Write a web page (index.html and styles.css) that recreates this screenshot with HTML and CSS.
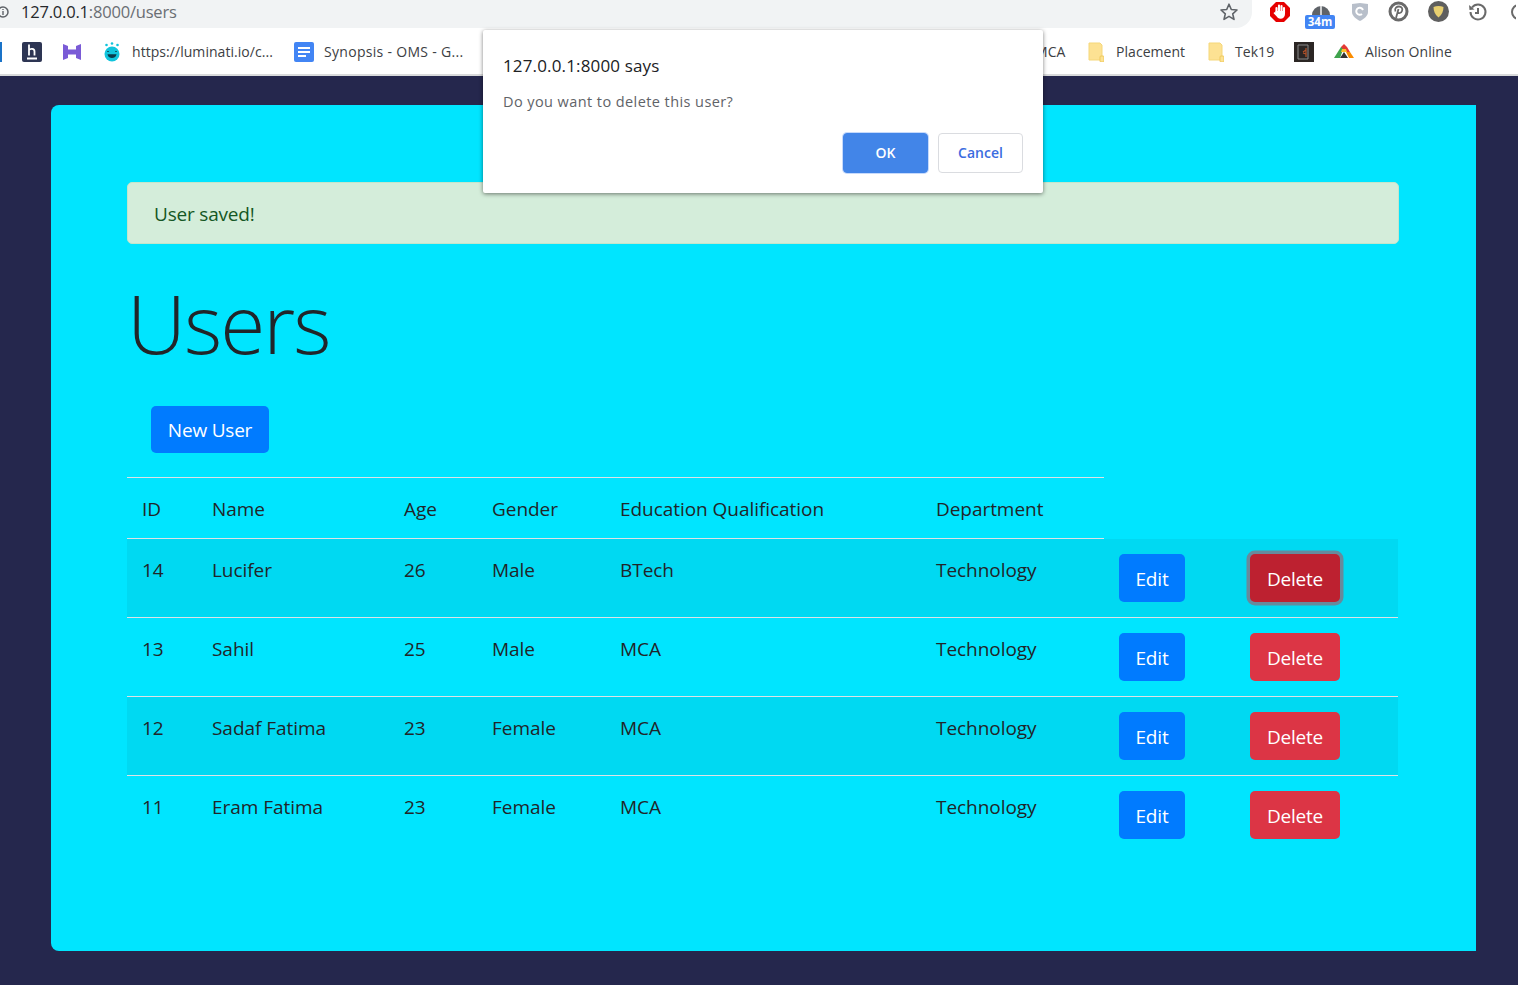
FILE: index.html
```html
<!DOCTYPE html>
<html lang="en">
<head>
    <meta charset="UTF-8">
    <meta name="viewport" content="width=device-width, initial-scale=1.0">
    <title>Users</title>
    <link rel="stylesheet" href="styles.css">
</head>
<body>
    <header class="browser">
        <div class="toolbar">
            <div class="omnibox">
                <svg class="info-icon" width="12" height="14" viewBox="0 0 12 14"><circle cx="3" cy="7" r="5" fill="none" stroke="#5f6368" stroke-width="1.5"/><path d="M3 6v4M3 4v1" stroke="#5f6368" stroke-width="1.4"/></svg>
                <span class="url"><span class="url-host">127.0.0.1</span>:8000/users</span>
                <svg class="star" width="20" height="20" viewBox="0 0 20 20"><path d="M10 2.2l2.3 5.3 5.7.5-4.3 3.8 1.3 5.6-5-3-5 3 1.3-5.6L2 8l5.7-.5z" fill="none" stroke="#5f6368" stroke-width="1.6" stroke-linejoin="round"/></svg>
            </div>
            <div class="extensions">
                <svg width="22" height="22" viewBox="0 0 22 22"><path d="M7 1h8l6 6v8l-6 6H7l-6-6V7z" fill="#e60000"/><path d="M7.500 12V7M10 11V4.500M12.500 11V5M15 12V7" stroke="#fff" stroke-width="2.100" stroke-linecap="round"/><path d="M6.500 10h9.500v3c0 3-2 4.800-4.500 4.800-2 0-3-1-4-2.500L4.800 12.500c-.6-1 .8-1.900 1.700-1z" fill="#fff"/></svg>
                <div class="timer">
                    <svg width="20" height="12" viewBox="0 0 20 12"><path d="M1 12a9 9 0 0118 0z" fill="#5f6368"/><path d="M10 2v10" stroke="#fff" stroke-width="1.400"/></svg>
                    <span class="timer-badge">34m</span>
                </div>
                <svg width="18" height="20" viewBox="0 0 18 20"><path d="M1 2l8-1 8 1v8c0 4-4 7-8 9-4-2-8-5-8-9z" fill="#b8bfca"/><path d="M12 8a3.500 3.500 0 10-1 4" fill="none" stroke="#fff" stroke-width="2"/></svg>
                <svg width="21" height="21" viewBox="0 0 21 21"><circle cx="10.500" cy="10.500" r="8.500" fill="none" stroke="#6a6a6a" stroke-width="3"/><path d="M8 17l2.500-9M7.500 10.500C6 7 9 5.500 11 5.500c2.500 0 4 2 3 4.500-.8 2-3.500 3-4.500 1" fill="none" stroke="#6a6a6a" stroke-width="1.800"/></svg>
                <svg width="21" height="21" viewBox="0 0 21 21"><circle cx="10.500" cy="10.500" r="10.500" fill="#5f5f5f"/><path d="M5.500 6c3-1.500 7-1.500 10 0 0 4-1.500 8-5 10.500C7 14 5.500 10 5.500 6z" fill="#e8cf70"/></svg>
                <svg width="20" height="20" viewBox="0 0 20 20"><path d="M4 5.500A7.500 7.500 0 112.500 10" fill="none" stroke="#6a6a6a" stroke-width="2"/><path d="M1 3l.5 5 5-.5z" fill="#6a6a6a"/><path d="M10 6v5H7" fill="none" stroke="#6a6a6a" stroke-width="2"/></svg>
                <svg class="ext-cut" width="6" height="20" viewBox="0 0 6 20"><circle cx="9" cy="10" r="7" fill="none" stroke="#6a6a6a" stroke-width="2"/></svg>
            </div>
        </div>
        <nav class="bookmarks">
            <div class="bm-cut"></div>
            <svg class="bm-h" width="20" height="20" viewBox="0 0 20 20"><rect width="20" height="20" rx="2" fill="#2d3553"/><path d="M7 2.500V13.500M7 8c1-1.500 5.500-2 5.500 1.500V13.500M5 16.500h10" fill="none" stroke="#fff" stroke-width="1.800"/></svg>
            <svg class="bm-hash" width="18" height="18" viewBox="0 0 18 18"><path d="M0 1l5 2v3.500h8V3l5-2v16l-5-2v-3.500H5V15l-5 2z" fill="#7a5bd6"/></svg>
            <svg class="bm-crown" width="16" height="20" viewBox="0 0 16 20"><circle cx="8" cy="12" r="7.500" fill="#11c4dc"/><path d="M4 10v-1M12 10v-1M4.500 13c1 3 6 3 7 0z" stroke="#0a3a4a" stroke-width="1.500" fill="#0a3a4a"/><circle cx="2.500" cy="3" r="1.300" fill="#11c4dc"/><circle cx="8" cy="1.500" r="1.300" fill="#11c4dc"/><circle cx="13.500" cy="3" r="1.300" fill="#11c4dc"/></svg>
            <span class="bm-label bm-luminati">https://luminati.io/c...</span>
            <svg class="bm-doc" width="20" height="20" viewBox="0 0 20 20"><rect width="20" height="20" rx="2" fill="#4285f4"/><path d="M4 6h12M4 10h12M4 14h8" stroke="#fff" stroke-width="2"/></svg>
            <span class="bm-label bm-synopsis">Synopsis - OMS - G...</span>
            <span class="bm-label bm-mca">MCA</span>
            <svg class="bm-folder bm-folder-first" width="16" height="20" viewBox="0 0 16 20"><path d="M1 1h11l2 2v15H1z" fill="#fde293" stroke="#f5d77a"/><rect x="12" y="14" width="4" height="6" rx="1" fill="#fde293" stroke="#eec95c"/></svg>
            <span class="bm-label bm-placement">Placement</span>
            <svg class="bm-folder bm-folder-second" width="16" height="20" viewBox="0 0 16 20"><path d="M1 1h11l2 2v15H1z" fill="#fde293" stroke="#f5d77a"/><rect x="12" y="14" width="4" height="6" rx="1" fill="#fde293" stroke="#eec95c"/></svg>
            <span class="bm-label bm-tek">Tek19</span>
            <svg class="bm-dark" width="20" height="20" viewBox="0 0 20 20"><rect width="20" height="20" fill="#2b2624"/><path d="M4 3h10v14H4z" fill="none" stroke="#8a8a8a"/><path d="M12 6v9M9 10l3-2M9 11l3 1" stroke="#b5532a" stroke-width="1.200" fill="none"/></svg>
            <svg class="bm-alison" width="20" height="16" viewBox="0 0 20 16"><path d="M0 14L7 3h3l-4 11z" fill="#3fa34d"/><path d="M7 3l3-3 3 3 3 5h-4z" fill="#e53935"/><path d="M12 8h4l4 6h-5z" fill="#fb8c00"/><path d="M6 14l4-6 4 6z" fill="#333"/><path d="M8 5h4l1 3H7z" fill="#fbc02d"/></svg>
            <span class="bm-label bm-alison-text">Alison Online</span>
        </nav>
    </header>

    <main class="page">
        <section class="card">
            <div class="alert">User saved!</div>
            <h1>Users</h1>
            <button class="btn btn-primary new-user">New User</button>
            <table class="users">
                <colgroup>
                    <col class="col-id"><col class="col-name"><col class="col-age"><col class="col-gender"><col class="col-edu"><col class="col-dept"><col class="col-edit"><col class="col-delete">
                </colgroup>
                <thead>
                    <tr>
                        <th>ID</th><th>Name</th><th>Age</th><th>Gender</th><th>Education Qualification</th><th>Department</th>
                    </tr>
                </thead>
                <tbody>
                    <tr>
                        <td>14</td><td>Lucifer</td><td>26</td><td>Male</td><td>BTech</td><td>Technology</td>
                        <td class="cell-action"><button class="btn btn-primary btn-edit">Edit</button></td>
                        <td class="cell-action"><button class="btn btn-danger btn-delete btn-focus">Delete</button></td>
                    </tr>
                    <tr>
                        <td>13</td><td>Sahil</td><td>25</td><td>Male</td><td>MCA</td><td>Technology</td>
                        <td class="cell-action"><button class="btn btn-primary btn-edit">Edit</button></td>
                        <td class="cell-action"><button class="btn btn-danger btn-delete">Delete</button></td>
                    </tr>
                    <tr>
                        <td>12</td><td>Sadaf Fatima</td><td>23</td><td>Female</td><td>MCA</td><td>Technology</td>
                        <td class="cell-action"><button class="btn btn-primary btn-edit">Edit</button></td>
                        <td class="cell-action"><button class="btn btn-danger btn-delete">Delete</button></td>
                    </tr>
                    <tr>
                        <td>11</td><td>Eram Fatima</td><td>23</td><td>Female</td><td>MCA</td><td>Technology</td>
                        <td class="cell-action"><button class="btn btn-primary btn-edit">Edit</button></td>
                        <td class="cell-action"><button class="btn btn-danger btn-delete">Delete</button></td>
                    </tr>
                </tbody>
            </table>
        </section>
    </main>

    <div class="dialog">
        <h2>127.0.0.1:8000 says</h2>
        <p>Do you want to delete this user?</p>
        <div class="dialog-actions">
            <button class="dialog-ok">OK</button>
            <button class="dialog-cancel">Cancel</button>
        </div>
    </div>
</body>
</html>
```

FILE: styles.css
```css
* {
    box-sizing: border-box;
}

html, body {
    height: 985px;
    overflow: hidden;
}

body {
    margin: 0;
    background-color: #25274d;
    font-family: "Open Sans", "Noto Sans", sans-serif;
    color: #212529;
    position: relative;
}

/* browser chrome */
.browser {
    background-color: #fff;
    height: 76px;
    border-bottom: 2px solid #d9dadb;
}

.toolbar {
    display: flex;
    height: 29px;
}

.omnibox {
    width: 1252px;
    height: 28px;
    background-color: #f1f3f4;
    border-bottom-right-radius: 16px;
    display: flex;
    align-items: center;
    padding-bottom: 5px;
    padding-right: 13px;
}

.url {
    margin-left: 9px;
    font-size: 16.500px;
    color: #6a6e73;
    letter-spacing: -0.2px;
}

.url-host {
    color: #26282b;
}

.star {
    margin-left: auto;
}

.extensions {
    flex: 1;
    display: flex;
    align-items: center;
    gap: 19px;
    padding-left: 17px;
    padding-bottom: 6px;
    overflow: hidden;
}

.timer {
    position: relative;
    width: 31px;
    height: 29px;
    display: flex;
    justify-content: center;
    padding-top: 3px;
    margin-top: 6px;
    margin-left: -5px;
    margin-right: -4px;
}

.timer-badge {
    position: absolute;
    left: 0;
    top: 15px;
    width: 30px;
    height: 14px;
    background-color: #4285f4;
    border-radius: 2px;
    color: #fff;
    font-size: 11.500px;
    font-weight: 700;
    line-height: 14px;
    text-align: center;
}

.ext-cut {
    margin-left: 3px;
}

.bookmarks {
    height: 45px;
    display: flex;
    align-items: center;
    position: relative;
}

.bm-label {
    font-size: 14px;
    color: #3c4043;
    white-space: nowrap;
    letter-spacing: 0.05px;
}

.bm-cut {
    width: 2px;
    height: 20px;
    background-color: #1a73c8;
}

.bm-h { margin-left: 20px; }
.bm-hash { margin-left: 21px; }
.bm-crown { margin-left: 23px; }
.bm-luminati { margin-left: 12px; width: 142px; }
.bm-doc { margin-left: 20px; }
.bm-synopsis { margin-left: 10px; width: 140px; letter-spacing: 0.3px; }
.bm-mca { margin-left: 571px; width: 32px; }
.bm-folder-first { margin-left: 21px; }
.bm-placement { margin-left: 12px; width: 69px; }
.bm-folder-second { margin-left: 23px; }
.bm-tek { margin-left: 11px; width: 39px; }
.bm-dark { margin-left: 20px; }
.bm-alison { margin-left: 20px; }
.bm-alison-text { margin-left: 11px; }

/* page */
.page {
    padding: 29px 42px 0 51px;
}

.card {
    height: 846px;
    background-color: #00e5ff;
    border-radius: 8px 0 0 8px;
    padding: 77px 77px 0 76px;
}

.alert {
    height: 62px;
    padding: 0 26px;
    background-color: #d4edda;
    border: 1px solid #c3e6cb;
    border-radius: 5px;
    color: #155724;
    font-size: 19px;
    line-height: 62px;
    letter-spacing: -0.2px;
}

h1 {
    margin: 24px 0 0;
    height: 138px;
    font-size: 82px;
    font-weight: 300;
    line-height: 108px;
    letter-spacing: -2px;
}

.btn {
    height: 48px;
    padding: 2px 0 0;
    border: 1px solid transparent;
    border-radius: 5px;
    font-family: inherit;
    font-size: 19px;
    color: #fff;
    letter-spacing: -0.2px;
    cursor: pointer;
}

.btn-primary {
    background-color: #007bff;
}

.btn-danger {
    background-color: #dc3545;
}

.btn-edit {
    width: 66px;
}

.btn-delete {
    width: 90px;
}

.btn-focus {
    background-color: #bd2130;
    box-shadow: 0 0 0 3.500px #678a9c;
}

.new-user {
    margin-left: 24px;
    width: 118px;
    height: 47px;
    padding-top: 0;
}

.users {
    width: 1271px;
    margin-top: 24px;
    border-collapse: collapse;
    table-layout: fixed;
    font-size: 19px;
    letter-spacing: -0.05px;
}

.col-id { width: 70px; }
.col-name { width: 192px; }
.col-age { width: 88px; }
.col-gender { width: 128px; }
.col-edu { width: 316px; }
.col-dept { width: 183px; }
.col-edit { width: 131px; }
.col-delete { width: 163px; }

th, td {
    padding: 16px 15px 14px;
    text-align: left;
    vertical-align: top;
    line-height: 30px;
}

th {
    font-weight: 400;
    border-top: 1px solid #dee2e6;
    border-bottom: 1px solid #dee2e6;
}

td {
    border-top: 1px solid #dee2e6;
    height: 79px;
}

td.cell-action {
    padding: 15px 0 15px 15px;
}

tbody tr:nth-child(1) td {
    border-top: none;
}

tbody tr:nth-child(odd) {
    background-color: rgba(0, 0, 0, 0.05);
}

/* alert dialog */
.dialog {
    position: absolute;
    left: 483px;
    top: 30px;
    width: 560px;
    height: 163px;
    background-color: #fff;
    border-radius: 2px;
    box-shadow: 0 1px 4px rgba(0, 0, 0, 0.5);
    padding: 21px 20px 20px;
}

.dialog h2 {
    margin: 0;
    font-size: 17px;
    font-weight: 400;
    line-height: 30px;
    color: #202124;
    letter-spacing: 0.15px;
}

.dialog p {
    margin: 10px 0 0;
    font-size: 14.500px;
    line-height: 22px;
    color: #5f6368;
    letter-spacing: 0.42px;
}

.dialog-actions {
    display: flex;
    justify-content: flex-end;
    gap: 10px;
    margin-top: 20px;
}

.dialog-actions button {
    height: 40px;
    padding: 0 0 2px;
    border-radius: 4px;
    font-family: inherit;
    font-size: 14px;
    font-weight: 600;
    cursor: pointer;
}

.dialog-ok {
    width: 85px;
    background-color: #4285e8;
    border: 1px solid #4285e8;
    box-shadow: 0 0 0 1px #c6dafc;
    color: #fff;
}

.dialog-cancel {
    width: 85px;
    background-color: #fff;
    border: 1px solid #dadce0;
    color: #3b6ce0;
}
```
